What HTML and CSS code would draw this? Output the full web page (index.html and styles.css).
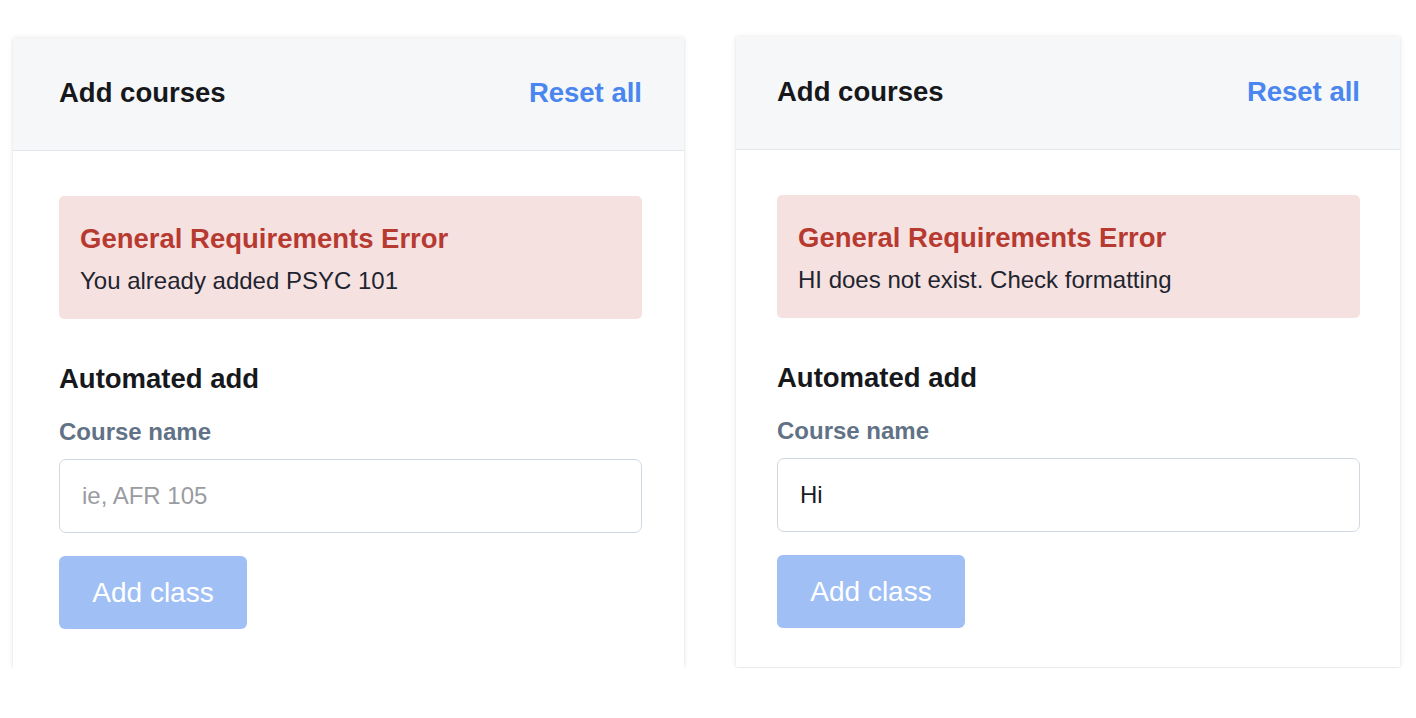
FILE: index.html
```html
<!DOCTYPE html>
<html lang="en">
<head>
<meta charset="utf-8">
<title>Add courses</title>
<link rel="stylesheet" href="styles.css">
</head>
<body>
<main class="page">
  <section class="card card--a">
    <header class="card-header">
      <h2 class="card-title">Add courses</h2>
      <a class="reset-link" href="#">Reset all</a>
    </header>
    <div class="card-body">
      <div class="alert">
        <div class="alert-title">General Requirements Error</div>
        <div class="alert-text">You already added PSYC 101</div>
      </div>
      <h3 class="section-title">Automated add</h3>
      <label class="field-label" for="course-a">Course name</label>
      <input class="field-input" id="course-a" type="text" placeholder="ie, AFR 105">
      <button class="btn-add" type="button">Add class</button>
    </div>
  </section>
  <section class="card card--b">
    <header class="card-header">
      <h2 class="card-title">Add courses</h2>
      <a class="reset-link" href="#">Reset all</a>
    </header>
    <div class="card-body">
      <div class="alert">
        <div class="alert-title">General Requirements Error</div>
        <div class="alert-text">HI does not exist. Check formatting</div>
      </div>
      <h3 class="section-title">Automated add</h3>
      <label class="field-label" for="course-b">Course name</label>
      <input class="field-input" id="course-b" type="text" value="Hi" placeholder="ie, AFR 105">
      <button class="btn-add" type="button">Add class</button>
    </div>
  </section>
</main>
</body>
</html>
```
FILE: styles.css
```css
* { box-sizing: border-box; }

html, body {
  margin: 0;
  padding: 0;
  background: #ffffff;
}

body {
  font-family: "Liberation Sans", Arial, Helvetica, sans-serif;
  color: #16181b;
}

.page {
  display: flex;
  align-items: flex-start;
  gap: 52px;
  padding: 37px 0 0 13px;
}

.card {
  background: #ffffff;
  box-shadow: 0 0 5px rgba(0, 0, 0, 0.10), 0 1px 2px rgba(0, 0, 0, 0.06);
  display: flex;
  flex-direction: column;
}

.card--a {
  width: 671px;
  margin-top: 1px;
  --pl: 46px;
  --pr: 42px;
}

.card--b {
  width: 664px;
  --pl: 41px;
  --pr: 40px;
}

.card-header {
  height: 113px;
  background: #f6f7f9;
  border-bottom: 1px solid #e1e7ee;
  display: flex;
  align-items: center;
  justify-content: space-between;
  padding: 0 var(--pr) 3px var(--pl);
}

.card-title {
  margin: 0;
  font-size: 27.5px;
  font-weight: 700;
  line-height: 34px;
  color: #16181b;
}

.reset-link {
  font-size: 27.5px;
  font-weight: 700;
  line-height: 34px;
  color: #4a86ef;
  text-decoration: none;
}

.card-body {
  display: flex;
  flex-direction: column;
  align-items: flex-start;
  padding: 45px var(--pr) 39px var(--pl);
}

.alert {
  align-self: stretch;
  background: #f6e1e1;
  border-radius: 5px;
  padding: 26px 22px 23px 21px;
}

.alert-title {
  font-size: 27.5px;
  font-weight: 700;
  line-height: 33px;
  color: #b73a31;
  margin-bottom: 11px;
}

.alert-text {
  font-size: 24px;
  line-height: 30px;
  color: #1f2530;
}

.section-title {
  margin: 43px 0 0 0;
  font-size: 27.5px;
  font-weight: 700;
  line-height: 34px;
  color: #16181b;
}

.field-label {
  margin-top: 21px;
  font-size: 24px;
  font-weight: 700;
  line-height: 30px;
  color: #617286;
}

.field-input {
  margin-top: 12px;
  align-self: stretch;
  height: 74px;
  border: 1.5px solid #cfd8e1;
  border-radius: 7px;
  padding: 0 22px;
  font-family: "Liberation Sans", Arial, Helvetica, sans-serif;
  font-size: 24px;
  color: #1a1c1f;
  background: #ffffff;
  outline: none;
}

.field-input::placeholder {
  color: #9b9ca2;
  opacity: 1;
}

.btn-add {
  margin-top: 23px;
  width: 188px;
  height: 73px;
  border: none;
  border-radius: 6px;
  background: #a0bff5;
  color: #ffffff;
  font-family: "Liberation Sans", Arial, Helvetica, sans-serif;
  font-size: 28px;
  padding: 0;
  cursor: default;
}
```
